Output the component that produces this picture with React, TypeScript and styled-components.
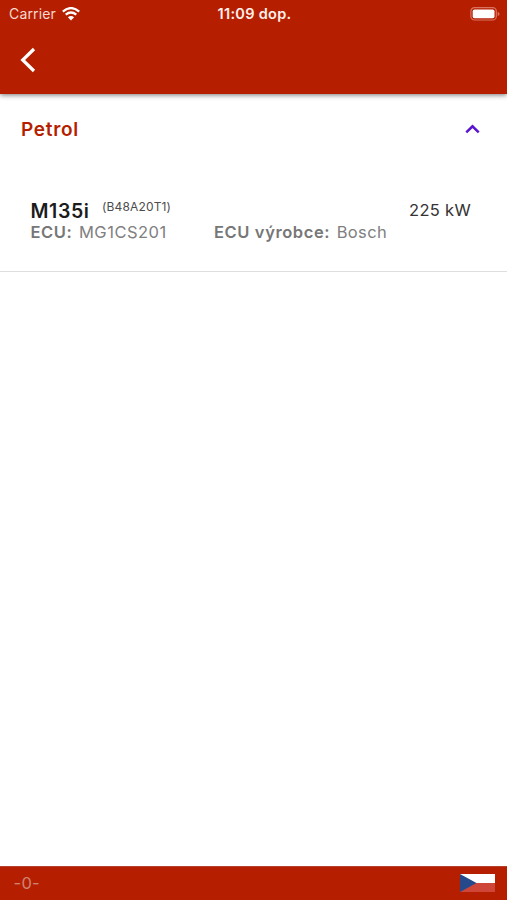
import React from 'react';
import styled, { createGlobalStyle } from 'styled-components';

const GlobalStyle = createGlobalStyle`
  * { box-sizing: border-box; }
  body {
    margin: 0;
    background: #fff;
    font-family: Inter, 'Liberation Sans', sans-serif;
  }
`;

const Screen = styled.div`
  display: flex;
  flex-direction: column;
  height: 900px;
  width: 100%;
  background: #fff;
  overflow: hidden;
`;

const Header = styled.header`
  flex: none;
  height: 94px;
  background: #b51f00;
  color: #fff;
  box-shadow: 0 1px 5px rgba(0, 0, 0, 0.55);
`;

const StatusBar = styled.div`
  display: grid;
  grid-template-columns: 1fr auto 1fr;
  align-items: center;
  height: 28px;
  padding: 0 7px 0 9px;
`;

const Carrier = styled.div`
  display: flex;
  align-items: center;
  gap: 6px;
  color: #f8d9d1;
`;

const BatterySlot = styled.div`
  display: flex;
  justify-content: flex-end;
  padding-bottom: 1px;
`;

const NavBar = styled.nav`
  display: flex;
  align-items: center;
  height: 64px;
  padding-left: 20px;
`;

const BackButton = styled.button`
  display: flex;
  padding: 0;
  border: 0;
  background: none;
  color: #fff;
`;

const Text = styled.span<{ $size: number; $weight?: number; $color?: string; $spacing?: number }>`
  font-size: ${(p) => p.$size}px;
  font-weight: ${(p) => p.$weight ?? 400};
  color: ${(p) => p.$color ?? 'inherit'};
  letter-spacing: ${(p) => p.$spacing ?? 0}px;
  line-height: 22px;
  white-space: nowrap;
`;

const Content = styled.main`
  flex: 1;
`;

const SectionHeader = styled.div`
  display: flex;
  align-items: center;
  justify-content: space-between;
  height: 70px;
  padding: 0 27px 0 21px;
`;

const SectionTitle = styled(Text)`
  padding-top: 2px;
`;

const Entry = styled.section`
  height: 108px;
  padding: 35px 36px 0 30.5px;
  border-bottom: 1px solid #dedede;
`;

const TitleRow = styled.div`
  display: flex;
  justify-content: space-between;
  height: 22px;
`;

const Model = styled.div`
  display: flex;
  gap: 12.5px;
`;

const ModelName = styled(Text)`
  padding-top: 1px;
`;

const EngineCode = styled.div`
  display: flex;
  margin-top: -3px;
`;

const Details = styled.div`
  display: grid;
  grid-template-columns: 183.5px 1fr;
`;

const Detail = styled.div`
  display: flex;
  gap: 6.5px;
`;

const Footer = styled.footer`
  flex: none;
  display: flex;
  align-items: center;
  justify-content: space-between;
  height: 34px;
  padding: 0 12px 2px 13.5px;
  background: #b51f00;
  border-top: 1px solid #b5402b;
`;

const WifiIcon = () => (
  <svg width="18" height="14" viewBox="0 0 18 14" fill="none" stroke="#fff">
    <path d="M.8 4.6Q9-2.4 17.2 4.6" strokeWidth="2.3" />
    <path d="M3.7 7.7Q9 3.3 14.3 7.7" strokeWidth="2.2" />
    <path d="M9 13.5L5.9 10.3Q9 7.9 12.1 10.3Z" fill="#fff" stroke="none" />
  </svg>
);

const BatteryIcon = () => (
  <svg width="30" height="14" viewBox="0 0 30 14">
    <rect x=".9" y=".7" width="25.4" height="12.3" rx="3.6" fill="none" stroke="#d9745f" strokeWidth="1.2" />
    <rect x="2.7" y="2.4" width="21.8" height="8.9" rx="1.8" fill="#fff" />
    <path d="M27.7 4.8Q29.6 5.5 29.6 6.9T27.7 9Z" fill="#d9745f" />
  </svg>
);

const BackIcon = () => (
  <svg width="17" height="26" viewBox="0 0 17 26" fill="none" stroke="currentColor" strokeWidth="3.2">
    <path d="M14 2L2.7 13L14 24" />
  </svg>
);

const CollapseIcon = () => (
  <svg width="15" height="10" viewBox="0 0 15 10" fill="none" stroke="#5a14cf" strokeWidth="2.5">
    <path d="M1.3 8.4L7.5 2.3L13.7 8.4" />
  </svg>
);

const CzechFlag = () => (
  <svg width="35" height="18" viewBox="0 0 35 18">
    <path d="M0 0H35V9H0Z" fill="#fff" />
    <path d="M0 9H35V18H0Z" fill="#cf4538" />
    <path d="M0 0L16.5 9L0 18Z" fill="#26498c" />
  </svg>
);

export default function App() {
  return (
    <Screen>
      <GlobalStyle />
      <Header>
        <StatusBar>
          <Carrier>
            <Text $size={14} $spacing={0.15}>Carrier</Text>
            <WifiIcon />
          </Carrier>
          <Text $size={14.5} $weight={600} $color="#fff0eb" $spacing={0.3}>11:09 dop.</Text>
          <BatterySlot><BatteryIcon /></BatterySlot>
        </StatusBar>
        <NavBar>
          <BackButton aria-label="Zpět"><BackIcon /></BackButton>
        </NavBar>
      </Header>
      <Content>
        <SectionHeader>
          <SectionTitle $size={19} $weight={600} $color="#b51f00" $spacing={0.7}>Petrol</SectionTitle>
          <CollapseIcon />
        </SectionHeader>
        <Entry>
          <TitleRow>
            <Model>
              <ModelName $size={19.5} $weight={600} $color="#1c1c1c" $spacing={0.6}>M135i</ModelName>
              <EngineCode><Text $size={12} $color="#4c4c4c" $spacing={0.15}>(B48A20T1)</Text></EngineCode>
            </Model>
            <Text $size={16.5} $color="#333" $spacing={0.3}>225 kW</Text>
          </TitleRow>
          <Details>
            <Detail>
              <Text $size={16.5} $weight={600} $color="#777" $spacing={0.6}>ECU:</Text>
              <Text $size={16.5} $color="#808080" $spacing={0.5}>MG1CS201</Text>
            </Detail>
            <Detail>
              <Text $size={16.5} $weight={600} $color="#777" $spacing={0.6}>ECU výrobce:</Text>
              <Text $size={16.5} $color="#808080" $spacing={0.35}>Bosch</Text>
            </Detail>
          </Details>
        </Entry>
      </Content>
      <Footer>
        <Text $size={16.5} $color="#d08373" $spacing={0.3}>-0-</Text>
        <CzechFlag />
      </Footer>
    </Screen>
  );
}
